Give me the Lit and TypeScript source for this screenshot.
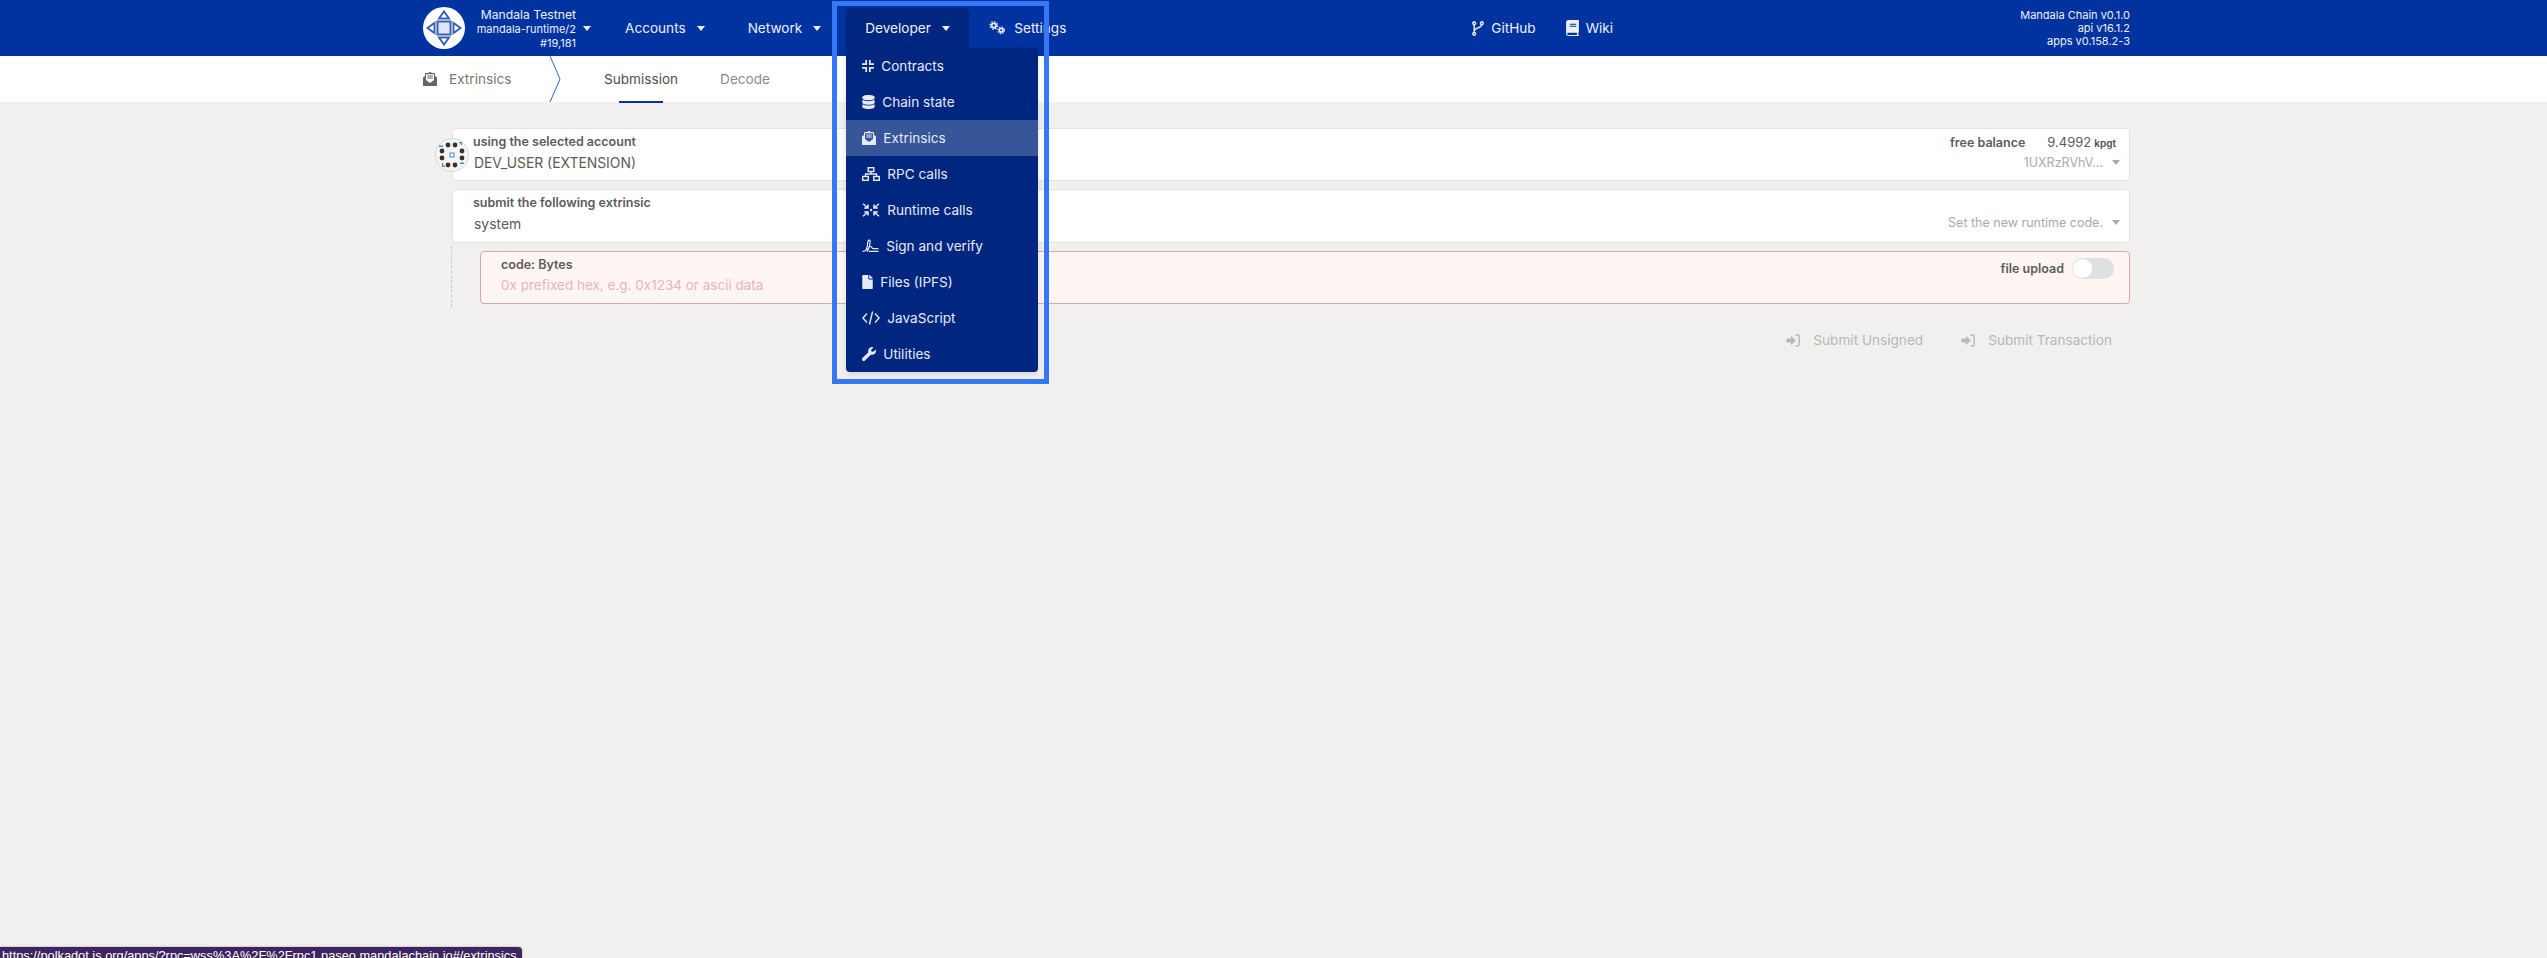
import { LitElement, html, css, svg } from "lit";
import { customElement } from "lit/decorators.js";

const caret = html`<span class="caret"></span>`;

const icons = {
  contracts: svg`<svg width="12" height="12" viewBox="0 0 12 12" fill="none" stroke="currentColor" stroke-width="1.7"><path d="M4.2 0v4.2H0M7.8 0v4.2H12M4.2 12V7.8H0M7.8 12V7.8H12"/></svg>`,
  database: svg`<svg width="13" height="14" viewBox="0 0 448 512" fill="currentColor"><path d="M448 73.143v45.714C448 159.143 347.667 192 224 192S0 159.143 0 118.857V73.143C0 32.857 100.333 0 224 0s224 32.857 224 73.143zM448 176v102.857C448 319.143 347.667 352 224 352S0 319.143 0 278.857V176c48.125 33.143 136.208 48.572 224 48.572S399.874 209.143 448 176zm0 160v102.857C448 479.143 347.667 512 224 512S0 479.143 0 438.857V336c48.125 33.143 136.208 48.572 224 48.572S399.874 369.143 448 336z"/></svg>`,
  envelope: svg`<svg width="14" height="14" viewBox="0 0 14 14" fill="currentColor"><path fill-rule="evenodd" d="M0 5.6 2 4V2.2C2 1.5 2.5 1 3.2 1H5.3L6.5.1c.3-.2.7-.2 1 0L8.7 1h2.1c.7 0 1.2.5 1.2 1.2V4l2 1.6V13c0 .6-.4 1-1 1H1c-.6 0-1-.4-1-1V5.6ZM4.2 3.6v.9h5.6v-.9H4.2Zm0 2v.9h5.6v-.9H4.2ZM3 2.2v5.9l4 2.9 4-2.9V2.2H3Z"/></svg>`,
  network: svg`<svg width="18" height="14" viewBox="0 0 18 14" fill="none" stroke="currentColor" stroke-width="1.4"><rect x="6.2" y=".7" width="5.6" height="3.8"/><rect x=".7" y="9.5" width="5.6" height="3.8"/><rect x="11.7" y="9.5" width="5.6" height="3.8"/><path d="M9 4.5V7M3.5 9.5V7h11v2.5"/></svg>`,
  runtime: svg`<svg width="18" height="14" viewBox="0 0 18 14" fill="none" stroke="currentColor" stroke-width="1.5"><path d="M1 .8 6 5M2.2 4.9H6V1.4M17 .8 12 5M15.8 4.9H12V1.4M1 13.2 6 9M2.2 9.1H6v3.5M17 13.2 12 9M15.8 9.1H12v3.5"/><circle cx="9" cy="7" r="1.2" fill="currentColor" stroke="none"/></svg>`,
  signature: svg`<svg width="17" height="14" viewBox="0 0 17 14" fill="none" stroke="currentColor" stroke-width="1.2"><path d="M.6 12.4h1.2C4 12.4 5.6 8 5.6 4.6 5.6 2.6 6.2 1.2 7.2 1.2 8.2 1.2 8.4 2.4 8 4.4 7.5 7 5.8 12.6 5.2 12.2 5 9 8.4 6.6 9.4 7.8 10 8.6 10 9.8 11.2 9.6H16.5M7 12.4H16.5"/></svg>`,
  file: svg`<svg width="11" height="14" viewBox="0 0 384 512" fill="currentColor"><path d="M224 136V0H24C10.700 0 0 10.700 0 24v464c0 13.300 10.700 24 24 24h336c13.300 0 24-10.700 24-24V160H248c-13.200 0-24-10.800-24-24zm160-14.100v6.100H256V0h6.100c6.400 0 12.500 2.500 17 7l97.900 98c4.500 4.500 7 10.600 7 16.900z"/></svg>`,
  code: svg`<svg width="18" height="14" viewBox="0 0 18 14" fill="none" stroke="currentColor" stroke-width="1.4"><path d="M5 2.500.9 7 5 11.500M13 2.500 17.100 7 13 11.500M10.600.5 7.400 13.500"/></svg>`,
  wrench: svg`<svg width="14" height="14" viewBox="0 0 512 512" fill="currentColor"><path d="M507.730 109.100c-2.240-9.030-13.540-12.090-20.120-5.510l-74.360 74.360-67.880-11.310-11.310-67.880 74.360-74.360c6.620-6.620 3.430-17.900-5.660-20.160-47.380-11.740-99.550.91-136.580 37.930-39.640 39.640-50.550 97.100-34.050 147.200L18.740 402.760c-24.990 24.990-24.990 65.510 0 90.500 24.990 24.990 65.510 24.990 90.500 0l213.210-213.210c50.120 16.710 107.470 5.680 147.370-34.220 37.070-37.070 49.700-89.320 37.910-136.730z"/></svg>`,
  cogs: svg`<svg width="17" height="14" viewBox="0 0 17 14" fill="none" stroke="currentColor"><circle cx="4.800" cy="4.500" r="2.200" stroke-width="1.800"/><circle cx="4.800" cy="4.500" r="3.800" stroke-width="1.300" stroke-dasharray="1.500 1.480"/><circle cx="12.200" cy="9.300" r="1.900" stroke-width="1.700"/><circle cx="12.200" cy="9.300" r="3.400" stroke-width="1.200" stroke-dasharray="1.300 1.370"/></svg>`,
  branch: svg`<svg width="12" height="15" viewBox="0 0 12 15" fill="none" stroke="currentColor" stroke-width="1.400"><circle cx="2.200" cy="2.200" r="1.400"/><circle cx="2.200" cy="12.800" r="1.400"/><circle cx="9.800" cy="2.200" r="1.400"/><path d="M2.200 3.700v7.600M9.800 3.700c0 3.500-7.600 2.800-7.600 6.500"/></svg>`,
  book: svg`<svg width="13" height="16" viewBox="0 0 12 15" fill="currentColor"><path fill-rule="evenodd" d="M2 0h9.200c.4 0 .8.400.8.800v10.400c0 .3-.2.500-.4.600-.2.600-.2 1.500 0 2.200.2.200.4.400.4.600v.100c0 .2-.2.300-.4.300H2c-1.100 0-2-.9-2-2V2C0 .9.900 0 2 0Zm1.500 3.500v.9h6v-.9h-6Zm0 2v.9h6v-.9h-6ZM2 12c-.5 0-1 .4-1 1s.5 1 1 1h8.200c-.1-.6-.1-1.400 0-2H2Z"/></svg>`,
  signin: svg`<svg width="14" height="13" viewBox="0 0 14 13" fill="currentColor"><path d="M5 1.800 9.700 6.500 5 11.200V8.400H.5V4.600H5V1.800Z"/><path d="M9.500 1h2.300c.9 0 1.400.6 1.400 1.400v8.200c0 .8-.5 1.400-1.400 1.400H9.500" fill="none" stroke="currentColor" stroke-width="1.400"/></svg>`,
};

const menu: [keyof typeof icons, string, boolean][] = [
  ["contracts", "Contracts", false],
  ["database", "Chain state", false],
  ["envelope", "Extrinsics", true],
  ["network", "RPC calls", false],
  ["runtime", "Runtime calls", false],
  ["signature", "Sign and verify", false],
  ["file", "Files (IPFS)", false],
  ["code", "JavaScript", false],
  ["wrench", "Utilities", false],
];

const logo = svg`<svg class="logo" width="42" height="42" viewBox="0 0 42 42"><circle cx="21" cy="21" r="21" fill="#fff"/><g fill="none" stroke="#3a62b4" stroke-width="2"><rect x="14.500" y="14.500" width="13" height="13" fill="#dfe6f4"/><path d="M21 4.500 26 11.500H16ZM21 37.500 26 30.500H16ZM4.500 21 11.500 16V26ZM37.500 21 30.500 16V26Z"/></g></svg>`;

const dots = [[13,7],[20,7],[7,13],[27,13],[7,20],[27,20],[13,27],[20,27]];
const identicon = svg`<svg class="identicon" width="34" height="34" viewBox="0 0 34 34"><circle cx="17" cy="17" r="16.500" fill="#f4f4f2" stroke="#d8d8d6"/>
<g fill="#3b8fd0"><path d="M4 7.500h4V9H4zM24 4h3v3h-1.300V5.300H24zM7 29h3v-1.300H8.300V25H7zM25 24.500h4V26h-4z"/><rect x="15" y="15" width="4" height="4" fill="none" stroke="#3b8fd0"/></g>
<g fill="#333">${dots.map(([x, y]) => svg`<circle cx=${x} cy=${y} r="2.400"/>`)}</g></svg>`;

@customElement("app-root")
export class AppRoot extends LitElement {
  static styles = css`
    :host {
      display: block;
      position: relative;
      height: 100vh;
      overflow: hidden;
      background: #f1f0ee;
      font-family: Inter, "Noto Sans", sans-serif;
      font-size: 13.600px;
      color: #4e4e4e;
    }
    .header {
      height: 56px;
      box-sizing: border-box;
      padding: 0 417px 0 423px;
      background: #0033a0;
      color: #edf0f8;
      display: flex;
      align-items: center;
    }
    .logo { flex: none; }
    .brand {
      margin-left: 14px;
      width: 97px;
      flex: none;
      align-items: flex-end;
      font-size: 11px;
      line-height: 14px;
      white-space: nowrap;
      display: flex;
      flex-direction: column;
    }
    .brand .title { font-size: 12.200px; line-height: 15px; }
    .caret {
      display: inline-block;
      flex: none;
      width: 0;
      height: 0;
      border-left: 4.500px solid transparent;
      border-right: 4.500px solid transparent;
      border-top: 5.500px solid currentColor;
    }
    .brand-caret { margin-left: 7px; }
    .nav { display: flex; align-items: center; gap: 11px; white-space: nowrap; }
    .accounts { margin-left: 34px; }
    .network { margin-left: 43px; }
    .developer {
      margin-left: 25px;
      position: relative;
      align-self: flex-start;
      margin-top: 8px;
      width: 123px;
      height: 48px;
      box-sizing: border-box;
      padding: 0 0 8px 19px;
      background: #002680;
      border-radius: 4px 4px 0 0;
    }
    .settings { margin-left: 20px; gap: 8px; }
    .github { margin-left: 406px; gap: 7px; }
    .wiki { margin-left: 30px; gap: 7px; }
    .versions {
      margin-left: auto;
      text-align: right;
      font-size: 11px;
      line-height: 13px;
      white-space: nowrap;
    }
    .menu {
      position: absolute;
      left: 0;
      top: 40px;
      width: 192px;
      background: #002680;
      border-radius: 0 4px 4px 4px;
      box-shadow: 0 2px 6px rgba(0, 0, 0, 0.12);
      z-index: 3;
    }
    .mi {
      height: 36px;
      display: flex;
      align-items: center;
      gap: 7px;
      padding-left: 16px;
      color: #e6eaf4;
    }
    .mi.active { background: #375599; }
    .focus {
      position: absolute;
      left: 832px;
      top: 1px;
      width: 217px;
      height: 383px;
      box-sizing: border-box;
      border: 5px solid #3478f6;
      z-index: 4;
      pointer-events: none;
    }
    .tabs {
      height: 46px;
      box-sizing: border-box;
      padding-left: 423px;
      background: #fff;
      display: flex;
      align-items: center;
      color: #777;
    }
    .tab-title { display: flex; align-items: center; gap: 12px; width: 126px; }
    .tab-title svg { color: #666; }
    .chevron { flex: none; align-self: stretch; width: 12px; }
    .tab-list { margin-left: 43px; display: flex; gap: 42px; }
    .tab { position: relative; color: #8b8b8b; }
    .tab.active { color: #4e4e4e; }
    .tab.active::after {
      content: "";
      position: absolute;
      left: 15px;
      width: 44px;
      top: 30px;
      height: 2px;
      background: #0033a0;
    }
    .main {
      padding: 26px 417px 0 452px;
      display: flex;
      flex-direction: column;
    }
    .card {
      position: relative;
      box-sizing: border-box;
      height: 53px;
      background: #fff;
      border: 1px solid #e3e2e0;
      border-radius: 4px;
      display: flex;
      justify-content: space-between;
      padding: 0 13px 0 20px;
    }
    .card + .card { margin-top: 8px; height: 54px; }
    .left, .right { display: flex; flex-direction: column; white-space: nowrap; }
    .right { align-items: flex-end; }
    .label {
      font-size: 12.500px;
      font-weight: 600;
      line-height: 14px;
      margin-top: 6px;
      color: #5c5b5b;
    }
    .value { margin: 6px 0 0 1px; font-size: 13.900px; line-height: 17px; color: #5a5a5a; }
    .identicon { position: absolute; left: -18px; top: 9px; }
    .balance { display: flex; align-items: baseline; margin-top: 6px; font-size: 12.500px; line-height: 14px; }
    .balance b { font-weight: 600; color: #5c5b5b; }
    .balance .num { margin-left: 22px; font-size: 13px; color: #5c5b5b; }
    .balance .unit { margin-left: 3px; font-size: 10px; font-weight: 600; }
    .hint {
      display: flex;
      align-items: center;
      gap: 9px;
      color: #aaa;
      font-size: 12.500px;
      line-height: 15px;
      margin-top: 5px;
      margin-right: -4px;
    }
    .hint.low { margin-top: 25px; }
    .params {
      margin: 3px 0 0 -1px;
      padding: 5px 0 3px 28px;
      border-left: 1px dashed #c9c8c6;
    }
    .card.err {
      margin: 0;
      background: #fff5f3;
      border-color: #e2a5a5;
      height: 53px;
    }
    .err .value { color: #e8b5b5; font-size: 13.500px; margin-top: 5px; margin-left: 0; }
    .upload { display: flex; align-items: center; gap: 8px; margin-top: 6px; }
    .upload .label { margin: 0; }
    .toggle {
      width: 42px;
      height: 21px;
      border-radius: 11px;
      background: #dfe0e0;
      display: flex;
      margin-right: 2px;
    }
    .toggle i {
      width: 19px;
      height: 19px;
      margin: 1px;
      border-radius: 50%;
      background: #fff;
    }
    .actions {
      display: flex;
      justify-content: flex-end;
      gap: 38px;
      margin-top: 23px;
      padding-right: 18px;
      color: #b8b8b8;
      white-space: nowrap;
    }
    .btn { display: flex; align-items: center; gap: 13px; line-height: 20px; }
    .status {
      position: absolute;
      left: 0;
      top: 947px;
      width: 522px;
      height: 11px;
      box-sizing: border-box;
      padding: 2px 0 0 2px;
      background: #3f2560;
      border-radius: 0 4px 0 0;
      box-shadow: 0 0 2px rgba(0, 0, 0, 0.4);
      color: #fff;
      font-family: "Liberation Sans", Arial, sans-serif;
      font-size: 12.800px;
      line-height: 14px;
      white-space: nowrap;
      overflow: hidden;
    }
  `;

  render() {
    return html`
      <div class="header">
        ${logo}
        <div class="brand">
          <span class="title">Mandala Testnet</span>
          <span>mandala-runtime/2</span>
          <span>#19,181</span>
        </div>
        <span class="caret brand-caret"></span>
        <div class="nav accounts">Accounts ${caret}</div>
        <div class="nav network">Network ${caret}</div>
        <div class="nav developer">
          Developer ${caret}
          <div class="menu">
            ${menu.map(
              ([icon, label, active]) => html`<div class="mi ${active ? "active" : ""}">${icons[icon]}<span>${label}</span></div>`
            )}
          </div>
        </div>
        <div class="nav settings">${icons.cogs}<span>Settings</span></div>
        <div class="nav github">${icons.branch}<span>GitHub</span></div>
        <div class="nav wiki">${icons.book}<span>Wiki</span></div>
        <div class="versions">
          <div>Mandala Chain v0.1.0</div>
          <div>api v16.1.2</div>
          <div>apps v0.158.2-3</div>
        </div>
      </div>
      <div class="tabs">
        <div class="tab-title">${icons.envelope}<span>Extrinsics</span></div>
        <svg class="chevron" viewBox="0 0 12 46" fill="none" stroke="#3a62b4" stroke-width="1"><path d="M1 0 11 23 1 46"/></svg>
        <div class="tab-list">
          <div class="tab active">Submission</div>
          <div class="tab">Decode</div>
        </div>
      </div>
      <div class="main">
        <div class="card">
          ${identicon}
          <div class="left">
            <div class="label">using the selected account</div>
            <div class="value">DEV_USER (EXTENSION)</div>
          </div>
          <div class="right">
            <div class="balance"><b>free balance</b><span class="num">9.4992</span><span class="unit">kpgt</span></div>
            <div class="hint">1UXRzRVhV... ${caret}</div>
          </div>
        </div>
        <div class="card">
          <div class="left">
            <div class="label">submit the following extrinsic</div>
            <div class="value">system</div>
          </div>
          <div class="right">
            <div class="hint low">Set the new runtime code. ${caret}</div>
          </div>
        </div>
        <div class="params">
          <div class="card err">
            <div class="left">
              <div class="label">code: Bytes</div>
              <div class="value">0x prefixed hex, e.g. 0x1234 or ascii data</div>
            </div>
            <div class="right">
              <div class="upload">
                <div class="label">file upload</div>
                <div class="toggle"><i></i></div>
              </div>
            </div>
          </div>
        </div>
        <div class="actions">
          <div class="btn">${icons.signin}<span>Submit Unsigned</span></div>
          <div class="btn">${icons.signin}<span>Submit Transaction</span></div>
        </div>
      </div>
      <div class="focus"></div>
      <div class="status">https://polkadot.js.org/apps/?rpc=wss%3A%2F%2Frpc1.paseo.mandalachain.io#/extrinsics</div>
    `;
  }
}
